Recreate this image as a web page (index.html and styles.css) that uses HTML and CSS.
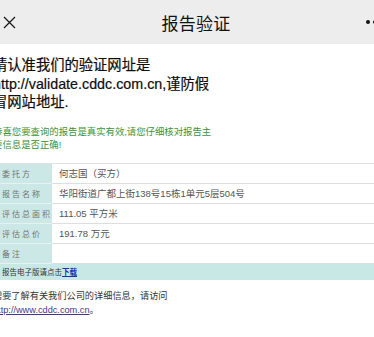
FILE: index.html
```html
<!DOCTYPE html>
<html lang="zh-CN">
<head>
<meta charset="utf-8">
<title>报告验证</title>
<link rel="stylesheet" href="styles.css">
</head>
<body>
<header class="topbar">
  <span class="close"><svg width="13" height="13" viewBox="0 0 13 13"><path d="M1 1L12 12M12 1L1 12" stroke="#1a1a1a" stroke-width="1.3" fill="none"/></svg></span>
  <h1 class="title">报告验证</h1>
  <span class="more"><i></i><i></i><i></i></span>
</header>
<main class="content">
  <p class="notice">请认准我们的验证网址是<br>http://validate.cddc.com.cn,谨防假冒网站地址.</p>
  <p class="success">恭喜您要查询的报告是真实有效,请您仔细核对报告主要信息是否正确!</p>
  <div class="report">
    <div class="row"><div class="label">委托方</div><div class="value">何志国（买方）</div></div>
    <div class="row"><div class="label">报告名称</div><div class="value">华阳街道广都上街138号15栋1单元5层504号</div></div>
    <div class="row"><div class="label">评估总面积</div><div class="value">111.05 平方米</div></div>
    <div class="row"><div class="label">评估总价</div><div class="value">191.78 万元</div></div>
    <div class="row"><div class="label">备注</div><div class="value"></div></div>
    <div class="download">报告电子版请点击<a href="#">下载</a></div>
  </div>
  <p class="about">需要了解有关我们公司的详细信息，请访问<br><a href="#">http://www.cddc.com.cn</a>。</p>
</main>
</body>
</html>
```
FILE: styles.css
```css
html, body {
  margin: 0;
  padding: 0;
  background: #ffffff;
  overflow: hidden;
  font-family: "Liberation Sans", "Noto Sans CJK SC", sans-serif;
}

.topbar {
  height: 44px;
  background: #ededed;
  display: grid;
  grid-template-columns: 1fr auto 1fr;
  align-items: center;
}

.close {
  justify-self: start;
  display: flex;
  margin-left: 3px;
  margin-top: 1px;
}

.title {
  margin: 0 0 0 18px;
  font-size: 17px;
  font-weight: normal;
  color: #111;
  font-family: "Noto Sans CJK SC", sans-serif;
  letter-spacing: 0.3px;
}

.more {
  justify-self: end;
  display: flex;
  gap: 3px;
  margin-right: -10px;
}

.more i {
  width: 4px;
  height: 4px;
  border-radius: 50%;
  background: #111;
}

.content {
  margin-left: -7px;
  width: calc(100% + 7px);
}

.notice {
  width: 226px;
  margin: 12px 0 0;
  font-size: 14.3px;
  line-height: 18.5px;
  color: #0d0d0d;
  -webkit-text-stroke: 0.2px #0d0d0d;
}

.success {
  width: 226px;
  margin: 13px 0 0;
  font-size: 9.4px;
  line-height: 13px;
  color: #3a923a;
}

.report {
  margin-top: 12px;
  border-top: 1px solid #e2e2e2;
}

.row {
  display: grid;
  grid-template-columns: 59px 1fr;
  height: 20px;
}

.label {
  background: #cbe8e6;
  border-bottom: 1px solid #e4f2f1;
  color: #737373;
  font-size: 8px;
  letter-spacing: 2px;
  padding-left: 9px;
  display: flex;
  align-items: center;
  white-space: nowrap;
  font-family: "Noto Sans CJK SC", sans-serif;
}

.value {
  border-bottom: 1px solid #dedede;
  color: #555;
  font-size: 9.5px;
  padding-left: 7px;
  display: flex;
  align-items: center;
  white-space: nowrap;
}

.download {
  height: 16px;
  background: #c7e8e5;
  font-size: 7.5px;
  color: #333;
  padding-left: 9px;
  display: flex;
  align-items: center;
  font-family: "Noto Sans CJK SC", sans-serif;
}

.download a {
  color: #1d2fb0;
  font-weight: bold;
  text-decoration: underline;
}

.about {
  width: 226px;
  margin: 9px 0 0;
  font-size: 9.2px;
  line-height: 14.5px;
  color: #333;
}

.about a {
  color: #45358e;
  text-decoration: underline;
}
```
